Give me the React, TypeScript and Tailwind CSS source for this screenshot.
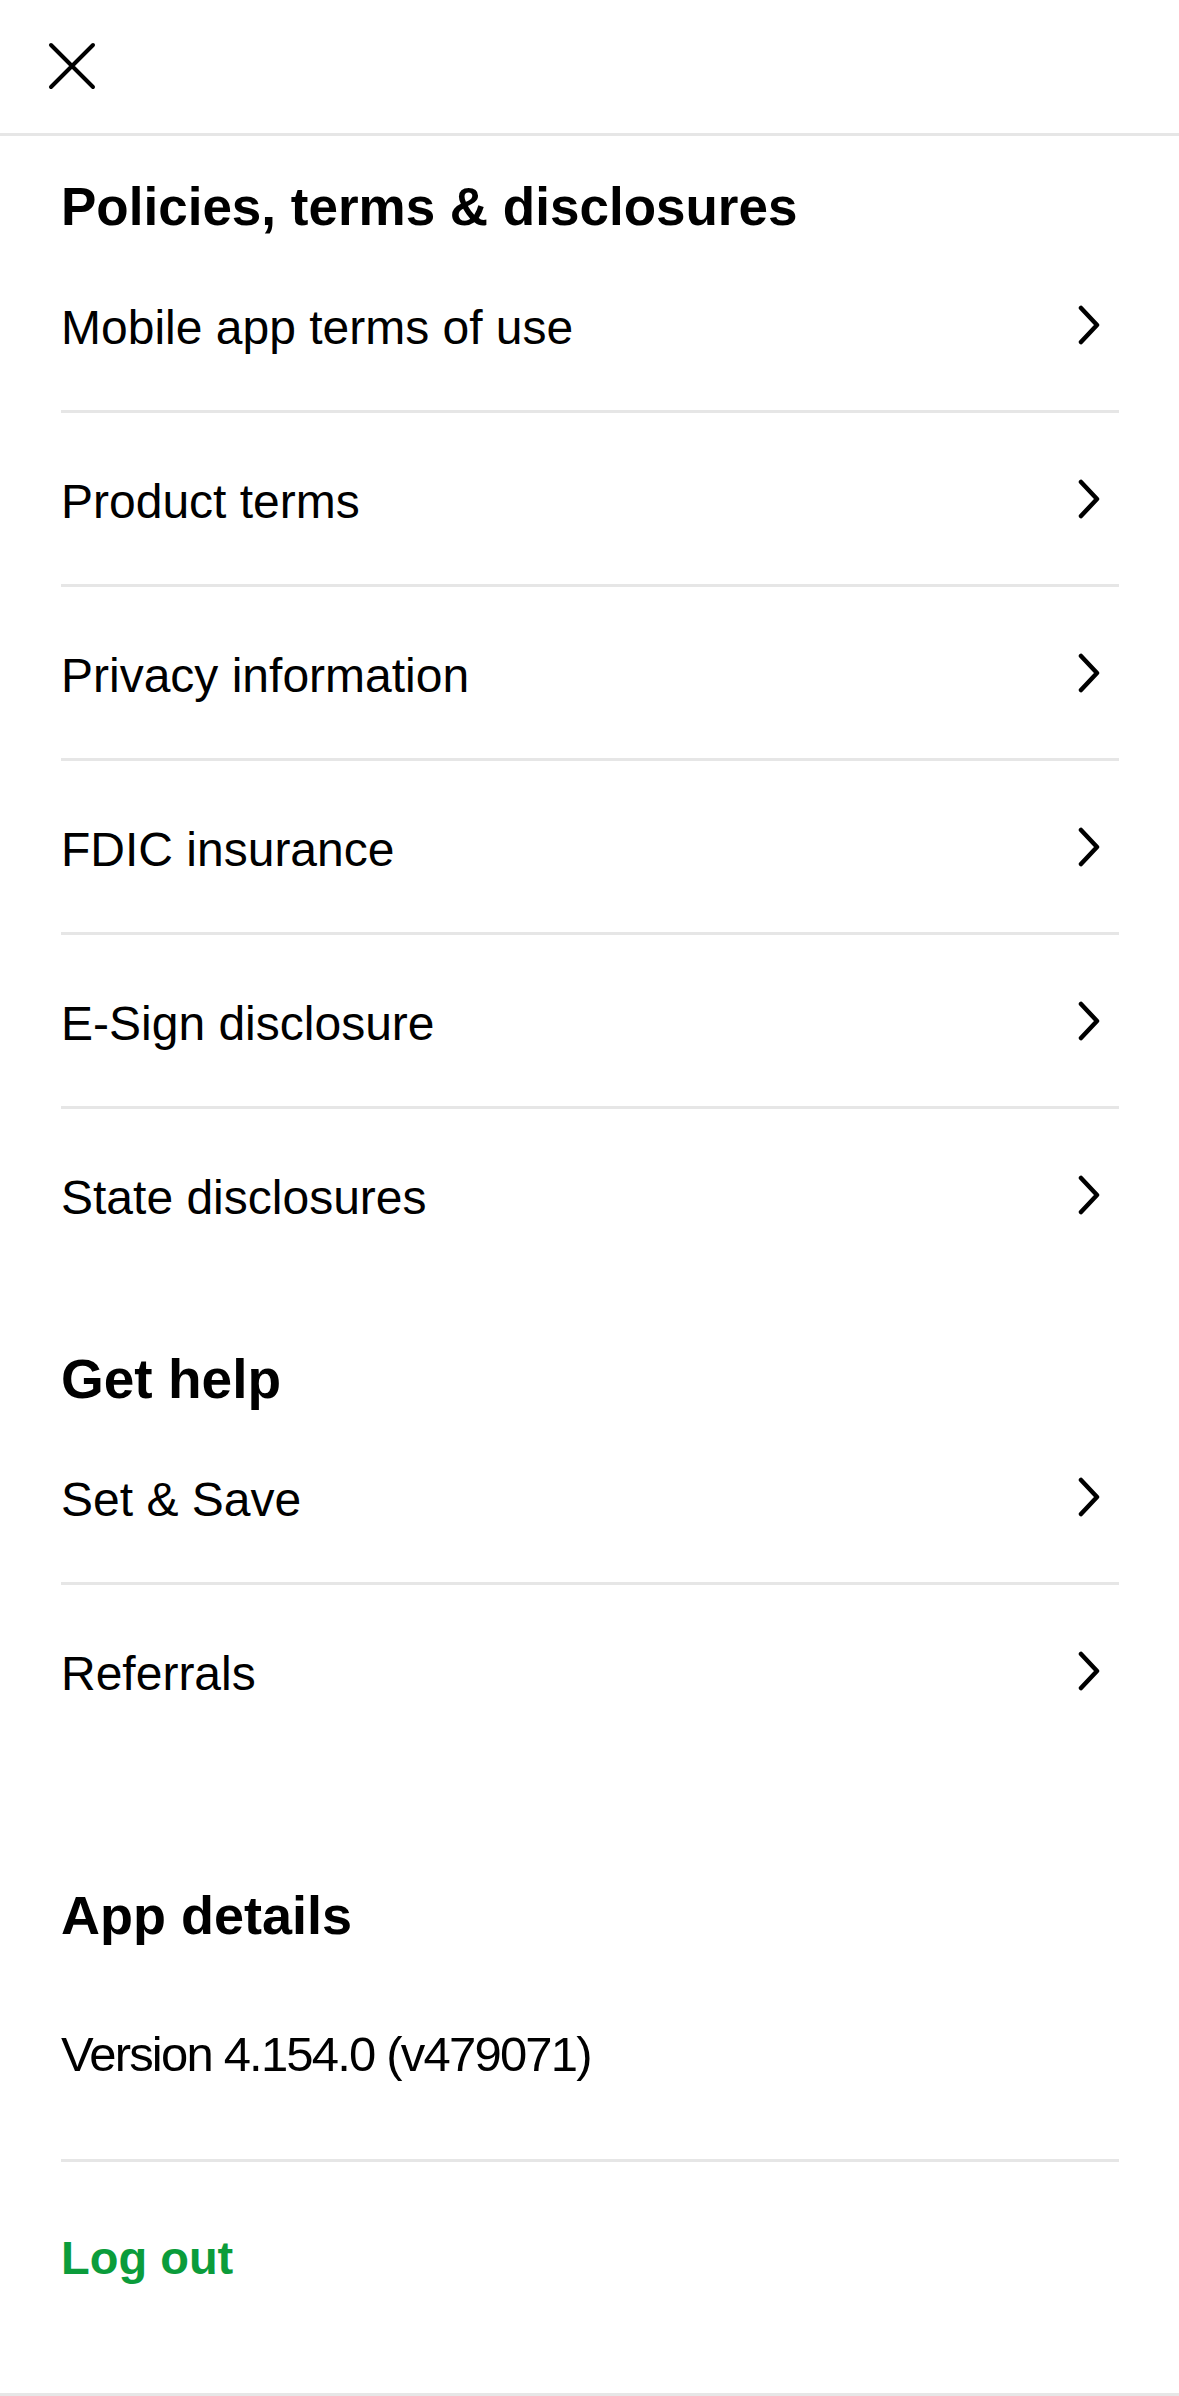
import React from "react";

const Chevron = () => (
  <svg width="24" height="40" viewBox="0 0 24 40" fill="none" className="mr-[18px] shrink-0">
    <path d="M4 3 L20 20 L4 37" stroke="#000" strokeWidth="4.5" strokeLinecap="round" strokeLinejoin="round" />
  </svg>
);

const Row = ({ label, last }: { label: string; last?: boolean }) => (
  <div
    className={
      "flex items-center justify-between " +
      (last ? "h-[171px]" : "h-[174px] border-b-[3px] border-[#e6e6e6]")
    }
  >
    <span className="text-[48px] leading-[59px] mt-[5px] text-black">{label}</span>
    <Chevron />
  </div>
);

export default function App() {
  return (
    <div
      className="w-[1179px] h-[2396px] bg-white flex flex-col overflow-hidden"
      style={{ fontFamily: '"Liberation Sans", Arial, sans-serif' }}
    >
      <div className="h-[136px] flex items-center pl-[48px] border-b-[3px] border-[#e6e6e6] shrink-0">
        <svg width="48" height="48" viewBox="0 0 48 48" fill="none" className="mt-[-2px]">
          <path d="M3 3 L45 45 M45 3 L3 45" stroke="#000" strokeWidth="4" strokeLinecap="round" />
        </svg>
      </div>
      <div className="flex-1 pl-[61px] pr-[60px] flex flex-col">
        <h2 className="mt-[39px] h-[64px] text-[53px] leading-[64px] font-bold text-black">
          Policies, terms &amp; disclosures
        </h2>
        <Row label="Mobile app terms of use" />
        <Row label="Product terms" />
        <Row label="Privacy information" />
        <Row label="FDIC insurance" />
        <Row label="E-Sign disclosure" />
        <Row label="State disclosures" last />

        <h2 className="mt-[67px] h-[64px] text-[55px] leading-[64px] font-bold text-black">Get help</h2>
        <Row label="Set & Save" />
        <Row label="Referrals" last />

        <h2 className="mt-[127px] h-[64px] text-[54px] leading-[64px] font-bold text-black">App details</h2>
        <div className="pb-[75px] border-b-[3px] border-[#e6e6e6]">
          <p className="mt-[78px] text-[49px] leading-[59px] tracking-[-1.8px] text-black">
            Version 4.154.0 (v479071)
          </p>
        </div>
        <p className="mt-[66px] text-[47px] leading-[59px] font-bold text-[#0b9c3b]">Log out</p>
      </div>
      <div className="h-[3px] bg-[#e6e6e6] shrink-0" />
    </div>
  );
}
